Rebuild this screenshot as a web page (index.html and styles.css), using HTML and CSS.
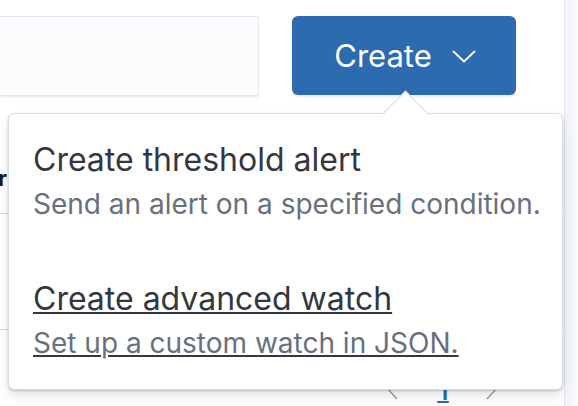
FILE: index.html
```html
<!DOCTYPE html>
<html lang="en">
<head>
<meta charset="utf-8">
<title>Watches</title>
<link rel="stylesheet" href="styles.css">
</head>
<body>
<div class="layout">
  <div class="main">
    <div class="toolbar">
      <div class="search"></div>
      <button class="create" type="button">
        <span class="create-label">Create</span>
        <svg class="chevron" width="24" height="13" viewBox="0 0 24 13" aria-hidden="true"><path d="M1.5 1.5 L12 11.5 L22.5 1.5" fill="none" stroke="#ffffff" stroke-width="1.8" stroke-linecap="round" stroke-linejoin="round"/></svg>
      </button>
    </div>
    <div class="thead"><span class="th-text">r</span></div>
    <div class="row"></div>
    <div class="pagination">
      <svg class="page-arrow" width="12" height="24" viewBox="0 0 12 24" aria-hidden="true"><path d="M11 1 L1 12 L11 23" fill="none" stroke="#98a2b3" stroke-width="1.5"/></svg>
      <span class="page-num">1</span>
      <svg class="page-arrow" width="12" height="24" viewBox="0 0 12 24" aria-hidden="true"><path d="M1 1 L11 12 L1 23" fill="none" stroke="#98a2b3" stroke-width="1.5"/></svg>
    </div>
  </div>
  <div class="side"></div>

  <div class="popover">
    <span class="popover-arrow"></span>
    <div class="item">
      <div class="item-title">Create threshold alert</div>
      <div class="item-desc">Send an alert on a specified condition.</div>
    </div>
    <a class="item item-link" href="#">
      <span class="item-title">Create advanced watch</span>
      <span class="item-desc">Set up a custom watch in JSON.</span>
    </a>
  </div>
</div>
</body>
</html>
```
FILE: styles.css
```css
* { box-sizing: border-box; }

html, body {
  margin: 0;
  padding: 0;
  background: #ffffff;
}

body {
  font-family: Inter, "Noto Sans", "Liberation Sans", sans-serif;
  color: #343741;
  width: 578px;
  height: 406px;
  overflow: hidden;
}

.layout {
  position: relative;
  display: flex;
  height: 406px;
}

.main {
  width: 564px;
  flex: none;
  display: flex;
  flex-direction: column;
  overflow: hidden;
}

.side {
  flex: 1;
  border-left: 1px solid #e3e6ee;
  background: linear-gradient(90deg, #f1f3f8 0%, #fafbfd 100%);
}

/* toolbar */
.toolbar {
  display: flex;
  align-items: flex-start;
  gap: 33px;
  padding-top: 16px;
}

.search {
  width: 261px;
  height: 80px;
  margin-left: -2px;
  background: #fafbfd;
  border: 1px solid #e4e7ef;
  box-shadow: 0 2px 2px -1px rgba(152, 162, 179, 0.25);
}

.create {
  width: 224px;
  height: 79px;
  display: flex;
  align-items: center;
  justify-content: center;
  gap: 20px;
  padding: 0 0 0 2px;
  border: none;
  border-radius: 6px;
  background: #2c6bb0;
  color: #ffffff;
  font-family: inherit;
  font-size: 31px;
  font-weight: 400;
  box-shadow: 0 2px 3px rgba(0, 0, 0, 0.08);
}

.create-label {
  line-height: 1;
}

.chevron {
  display: block;
  margin-top: 2px;
}

/* background table */
.thead {
  height: 119px;
  padding-top: 70px;
  border-bottom: 1px solid #d3dae6;
}

.th-text {
  display: block;
  margin-left: -2px;
  font-size: 22px;
  line-height: 24px;
  font-weight: 700;
  color: #1a1c21;
}

.row {
  height: 117px;
  border-bottom: 1px solid #d3dae6;
}

.pagination {
  display: flex;
  align-items: flex-start;
  padding-top: 44px;
  padding-left: 386px;
}

.page-arrow {
  display: block;
  margin-top: 2px;
}

.page-num {
  width: 24px;
  margin: 0 31px 0 33px;
  text-align: center;
  font-size: 28px;
  line-height: 32px;
  color: #2c6bb0;
  font-weight: 500;
  text-decoration: underline;
  text-decoration-thickness: 2px;
}

/* popover (overlay) */
.popover {
  position: absolute;
  left: 8px;
  top: 113px;
  width: 555px;
  height: 277px;
  padding: 22px 12px 0 24px;
  background: #ffffff;
  border: 1px solid #d9dde6;
  border-radius: 6px;
  box-shadow: 0 1px 2px rgba(0, 0, 0, 0.18), 0 4px 8px rgba(0, 0, 0, 0.07), 0 10px 20px rgba(0, 0, 0, 0.05);
  z-index: 2;
  white-space: nowrap;
}

.popover-arrow {
  position: absolute;
  left: 381px;
  top: -17px;
  width: 31px;
  height: 31px;
  background: #ffffff;
  border-top: 1px solid #d9dde6;
  border-left: 1px solid #d9dde6;
  transform: rotate(45deg);
}

.item {
  display: block;
  position: relative;
}

.item-title {
  display: block;
  font-size: 32px;
  line-height: 48px;
  color: #343741;
}

.item-desc {
  display: block;
  font-size: 28px;
  line-height: 40px;
  color: #69707d;
}

.item-link {
  margin-top: 51px;
  color: #343741;
  text-decoration: none;
}

.item-link .item-title,
.item-link .item-desc {
  display: table;
  text-decoration: underline;
  text-decoration-color: #343741;
  text-decoration-thickness: 2px;
  text-underline-offset: 2px;
}
```
